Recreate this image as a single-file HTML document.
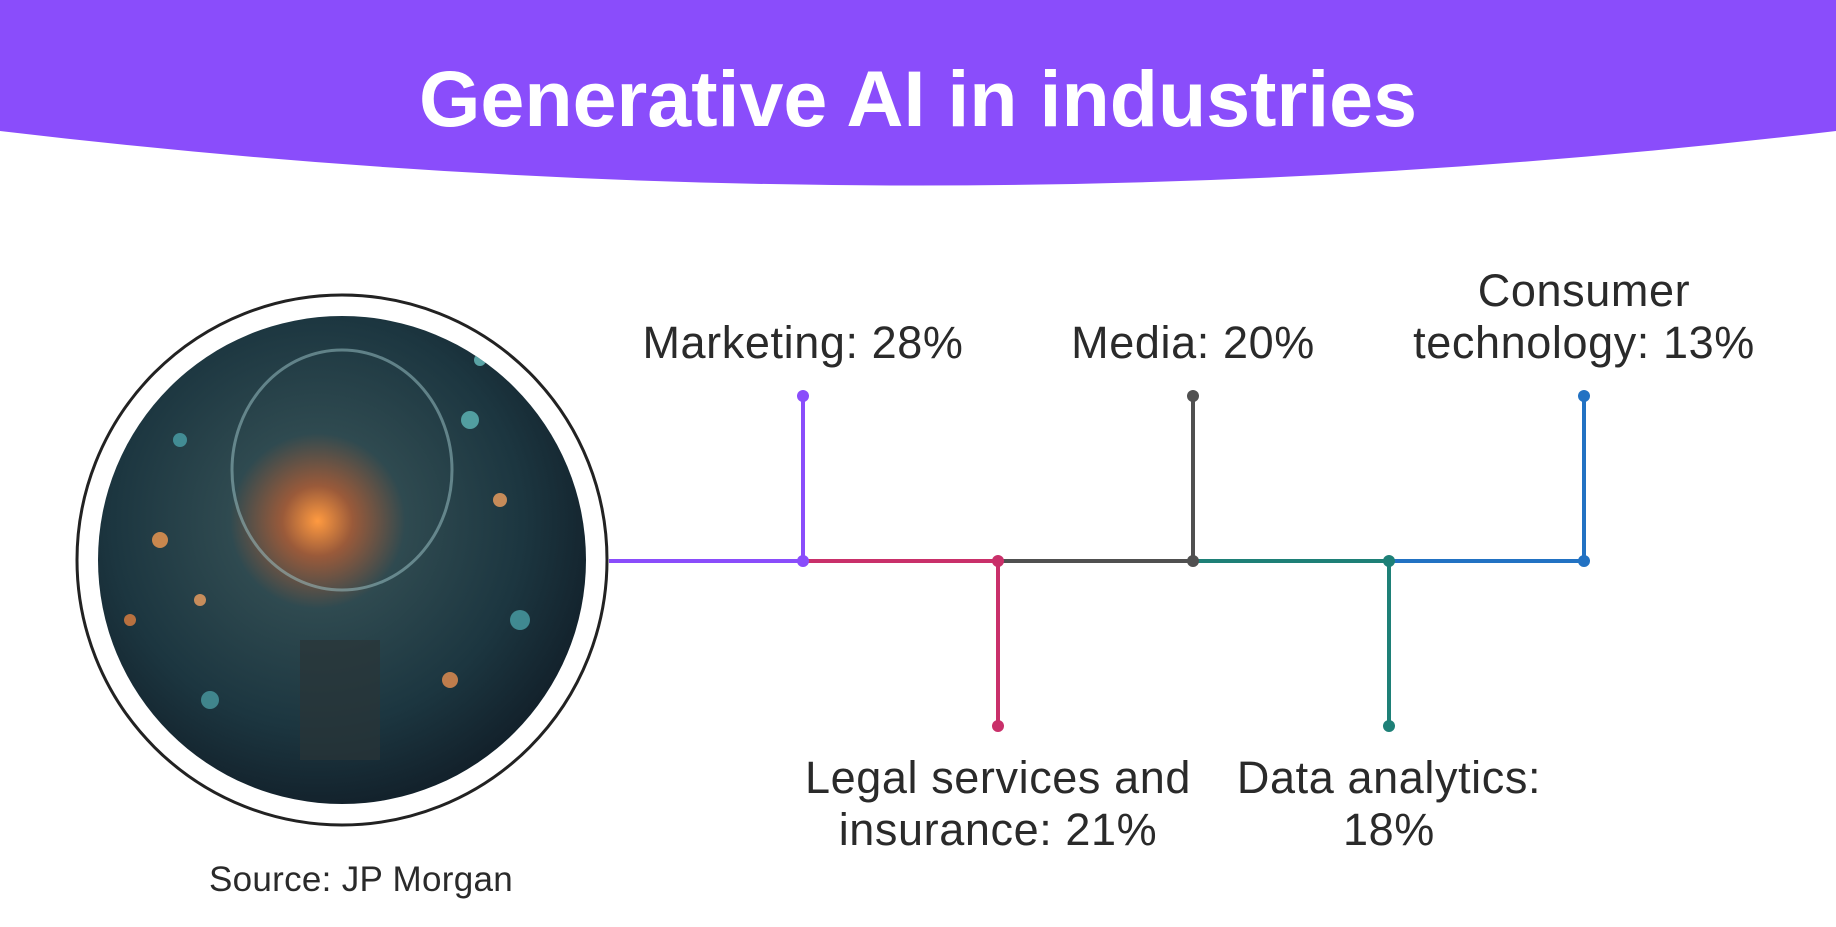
<!DOCTYPE html>
<html><head><style>
html,body{margin:0;padding:0;background:#fff;}
body{width:1836px;height:927px;position:relative;overflow:hidden;font-family:"Liberation Sans",sans-serif;}
.t{position:absolute;font-size:45px;letter-spacing:0.6px;color:#2a2a2a;text-align:center;line-height:52px;white-space:nowrap;transform:translateX(-50%);}
</style></head><body>
<svg width="1836" height="927" style="position:absolute;left:0;top:0">
<path d="M0 0 H1836 V131 Q918 240 0 131 Z" fill="#8a4dfb"/>
<text x="918" y="126" text-anchor="middle" font-family="Liberation Sans" font-weight="bold" font-size="79" fill="#fff">Generative AI in industries</text>
<defs>
<radialGradient id="g" cx="0.45" cy="0.42" r="0.6">
<stop offset="0" stop-color="#ff9a40"/>
<stop offset="0.12" stop-color="#9a5a3a"/>
<stop offset="0.3" stop-color="#2f4a50"/>
<stop offset="0.7" stop-color="#1c3640"/>
<stop offset="1" stop-color="#12202a"/>
</radialGradient>
<clipPath id="c"><circle cx="342" cy="560" r="244"/></clipPath>
</defs>
<circle cx="342" cy="560" r="265" fill="#fff" stroke="#222" stroke-width="3"/>
<circle cx="342" cy="560" r="244" fill="url(#g)"/>
<g clip-path="url(#c)" opacity="0.8">
<circle cx="160" cy="540" r="8" fill="#f29a50"/><circle cx="200" cy="600" r="6" fill="#f0a060"/>
<circle cx="470" cy="420" r="9" fill="#5fb8b8"/><circle cx="500" cy="500" r="7" fill="#f0a060"/>
<circle cx="520" cy="620" r="10" fill="#4aa0a8"/><circle cx="180" cy="440" r="7" fill="#4aa0a8"/>
<circle cx="450" cy="680" r="8" fill="#e89050"/><circle cx="210" cy="700" r="9" fill="#4a9aa0"/>
<circle cx="130" cy="620" r="6" fill="#e08040"/><circle cx="480" cy="360" r="6" fill="#6ac0c0"/>
</g>
<ellipse cx="342" cy="470" rx="110" ry="120" fill="none" stroke="#9fc8cc" stroke-width="3" opacity="0.5"/>
<rect x="300" y="640" width="80" height="120" fill="#2a3438" opacity="0.7"/>
<line x1="609" y1="561" x2="803" y2="561" stroke="#8a4dfb" stroke-width="4"/>
<line x1="803" y1="561" x2="998" y2="561" stroke="#c9306a" stroke-width="4"/>
<line x1="998" y1="561" x2="1193" y2="561" stroke="#505050" stroke-width="4"/>
<line x1="1193" y1="561" x2="1389" y2="561" stroke="#1e8077" stroke-width="4"/>
<line x1="1389" y1="561" x2="1584" y2="561" stroke="#2272c3" stroke-width="4"/>
<g stroke-width="4">
<line x1="803" y1="396" x2="803" y2="561" stroke="#8a4dfb"/>
<line x1="1193" y1="396" x2="1193" y2="561" stroke="#505050"/>
<line x1="1584" y1="396" x2="1584" y2="561" stroke="#2272c3"/>
<line x1="998" y1="561" x2="998" y2="726" stroke="#c9306a"/>
<line x1="1389" y1="561" x2="1389" y2="726" stroke="#1e8077"/>
</g>
<g>
<circle cx="803" cy="396" r="6" fill="#8a4dfb"/><circle cx="803" cy="561" r="6" fill="#8a4dfb"/>
<circle cx="1193" cy="396" r="6" fill="#505050"/><circle cx="1193" cy="561" r="6" fill="#505050"/>
<circle cx="1584" cy="396" r="6" fill="#2272c3"/><circle cx="1584" cy="561" r="6" fill="#2272c3"/>
<circle cx="998" cy="561" r="6" fill="#c9306a"/><circle cx="998" cy="726" r="6" fill="#c9306a"/>
<circle cx="1389" cy="561" r="6" fill="#1e8077"/><circle cx="1389" cy="726" r="6" fill="#1e8077"/>
</g>
</svg>
<div class="t" style="left:803px;top:317px">Marketing: 28%</div>
<div class="t" style="left:1193px;top:317px">Media: 20%</div>
<div class="t" style="left:1584px;top:265px">Consumer<br>technology: 13%</div>
<div class="t" style="left:998px;top:752px">Legal services and<br>insurance: 21%</div>
<div class="t" style="left:1389px;top:752px">Data analytics:<br>18%</div>
<div class="t" style="left:361px;top:860px;font-size:35px;letter-spacing:0.3px;line-height:40px">Source: JP Morgan</div>
</body></html>
